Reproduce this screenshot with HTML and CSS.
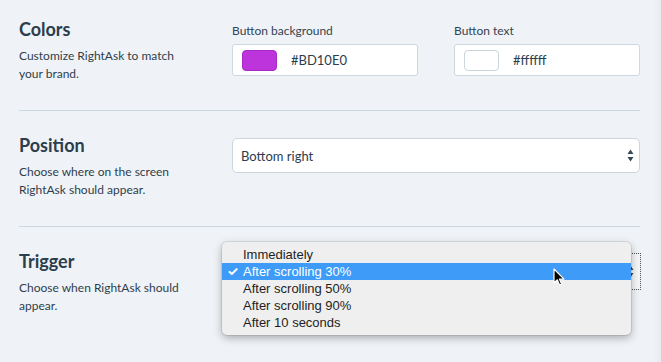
FILE: index.html
```html
<!DOCTYPE html>
<html lang="en">
<head>
    <meta charset="UTF-8">
    <meta name="viewport" content="width=device-width, initial-scale=1.0">
    <title>RightAsk settings</title>
    <link rel="stylesheet" href="styles.css">
</head>
<body>
    <div class="settings">

        <div class="section first">
            <div class="info">
                <h2>Colors</h2>
                <p>Customize RightAsk to match your brand.</p>
            </div>
            <div class="fields colors">
                <div class="field">
                    <label>Button background</label>
                    <div class="color-input">
                        <span class="swatch purple"></span>
                        <span class="value">#BD10E0</span>
                    </div>
                </div>
                <div class="field">
                    <label>Button text</label>
                    <div class="color-input">
                        <span class="swatch white"></span>
                        <span class="value">#ffffff</span>
                    </div>
                </div>
            </div>
        </div>

        <div class="section">
            <div class="info">
                <h2>Position</h2>
                <p>Choose where on the screen RightAsk should appear.</p>
            </div>
            <div class="fields">
                <div class="select">
                    <span>Bottom right</span>
                    <svg class="arrows" width="7" height="13" viewBox="0 0 7 13">
                        <path d="M3.5 0.5 L6.5 5 L0.5 5 Z M3.5 12.5 L6.5 8 L0.5 8 Z" fill="#34495a"/>
                    </svg>
                </div>
            </div>
        </div>

        <div class="section last">
            <div class="info">
                <h2>Trigger</h2>
                <p>Choose when RightAsk should appear.</p>
            </div>
            <div class="fields">
                <div class="select focused">
                    <!-- current value sits under the open menu -->
                    <span class="hidden-value">After scrolling 30%</span>
                    <svg class="arrows" width="7" height="13" viewBox="0 0 7 13">
                        <path d="M3.5 0.5 L6.5 5 L0.5 5 Z M3.5 12.5 L6.5 8 L0.5 8 Z" fill="#34495a"/>
                    </svg>

                    <ul class="menu">
                        <li>Immediately</li>
                        <li class="active"><span class="check">&#10003;</span>After scrolling 30%</li>
                        <li>After scrolling 50%</li>
                        <li>After scrolling 90%</li>
                        <li>After 10 seconds</li>
                    </ul>

                    <svg class="cursor" width="12" height="19" viewBox="0 0 12 19">
                        <path d="M1 1 L1 15 L4.3 11.8 L6.6 17 L8.6 16.1 L6.4 11.1 L11 11.1 Z" fill="#000" stroke="#fff" stroke-width="1.2" stroke-linejoin="round"/>
                    </svg>
                </div>
            </div>
        </div>

    </div>
</body>
</html>
```

FILE: styles.css
```css
body {
    margin: 0;
    background: linear-gradient(to right, #eff3f8 calc(100% - 7px), #e7eaef);
    font-family: 'Lato', 'Open Sans', sans-serif;
    color: #34434f;
    height: 362px;
    overflow: hidden;
}

.settings {
    padding: 0 21px 0 19px;
}

.section {
    display: grid;
    grid-template-columns: 213px 1fr;
    padding: 23px 0 27px;
    border-bottom: 1px solid #cbd8dd;
}

.section.first {
    padding-top: 18px;
}

.section.last {
    border-bottom: none;
}

.info h2 {
    margin: 0 0 7px;
    font-size: 18px;
    line-height: 22px;
    font-weight: 700;
    color: #2c3d4c;
}

.info p {
    margin: 0;
    font-size: 12px;
    line-height: 18px;
    width: 170px;
    color: #2f3e4b;
}

.fields {
    padding-top: 4px;
}

.fields.colors {
    padding-top: 5px;
    display: grid;
    grid-template-columns: 1fr 1fr;
    gap: 36px;
}

.field label {
    display: block;
    font-size: 12px;
    line-height: 16px;
    margin-bottom: 5px;
}

.color-input {
    display: flex;
    align-items: center;
    gap: 14px;
    height: 32px;
    box-sizing: border-box;
    padding: 0 9px;
    background: #fff;
    border: 1px solid #cdd9df;
    border-radius: 3px;
}

.swatch {
    width: 35px;
    height: 21px;
    box-sizing: border-box;
    border-radius: 4px;
}

.swatch.purple {
    background: #bd33dc;
    border: 1px solid #a52bc4;
}

.swatch.white {
    background: #fff;
    border: 1px solid #c9d6dc;
}

.value {
    font-size: 13px;
    color: #2c3d4c;
}

.select {
    position: relative;
    display: flex;
    align-items: center;
    justify-content: space-between;
    height: 35px;
    box-sizing: border-box;
    padding: 0 5px 0 8px;
    background: #fff;
    border: 1px solid #ccd5dc;
    border-radius: 5px;
    font-size: 13px;
    color: #2c3d4c;
}

.select.focused {
    border-color: transparent;
    border-radius: 0;
    outline: 1px dotted #555;
    background: #f4f5f7;
}

.hidden-value {
    visibility: hidden;
}

.menu {
    position: absolute;
    left: -11px;
    top: -13px;
    width: 409px;
    margin: 0;
    padding: 4px 0;
    list-style: none;
    background: #efefef;
    border-radius: 5px;
    box-shadow: 0 3px 8px rgba(0, 0, 0, 0.3), 0 0 0 1px rgba(0, 0, 0, 0.08);
    font-family: 'Liberation Sans', 'Inter', sans-serif;
    font-size: 13px;
    color: #1e1e1e;
}

.menu li {
    position: relative;
    height: 17px;
    line-height: 17px;
    padding-left: 21px;
}

.menu li.active {
    background: #3e9cf8;
    color: #fff;
}

.check {
    position: absolute;
    left: 5px;
    top: 0;
    font-size: 13px;
    font-weight: 700;
}

.cursor {
    position: absolute;
    left: 320px;
    top: 13px;
}
```
